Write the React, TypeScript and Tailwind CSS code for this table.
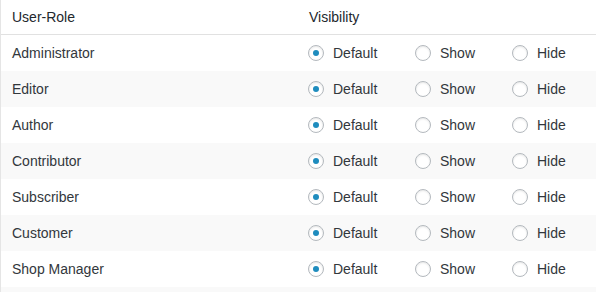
import React from "react";

const roles = [
  "Administrator",
  "Editor",
  "Author",
  "Contributor",
  "Subscriber",
  "Customer",
  "Shop Manager",
];

function Radio({ checked }: { checked?: boolean }) {
  return (
    <span className="w-4 h-4 rounded-full border border-[#b4b9be] bg-white shadow-[inset_0_1px_2px_rgba(0,0,0,0.1)] flex items-center justify-center shrink-0">
      {checked && <span className="w-[6px] h-[6px] rounded-full bg-[#1e8cbe]" />}
    </span>
  );
}

function Option({ label, checked, w }: { label: string; checked?: boolean; w: string }) {
  return (
    <label className={`flex items-center gap-[9px] ${w}`}>
      <Radio checked={checked} />
      <span>{label}</span>
    </label>
  );
}

export default function App() {
  return (
    <div
      className="w-[596px] h-[292px] overflow-hidden bg-white text-[14px] text-[#32373c]"
      style={{ fontFamily: '"Liberation Sans", Arial, sans-serif' }}
    >
      <div className="border-l border-[#e5e5e5] w-[620px]">
        <div className="flex items-center h-[35px] border-b border-[#e1e1e1] text-[#23282d]">
          <div className="w-[298px] pl-[11px]">User-Role</div>
          <div className="pl-[10px]">Visibility</div>
        </div>
        {roles.map((r, i) => (
          <div
            key={r}
            className={`flex items-center h-[36px] ${i % 2 === 1 ? "bg-[#f9f9f9]" : "bg-white"}`}
          >
            <div className="w-[298px] pl-[11px]">{r}</div>
            <div className="flex items-center pl-[9px]">
              <Option label="Default" checked w="w-[107px]" />
              <Option label="Show" w="w-[97px]" />
              <Option label="Hide" w="w-[90px]" />
            </div>
          </div>
        ))}
        <div className="h-[36px] bg-[#f9f9f9]" />
      </div>
    </div>
  );
}
